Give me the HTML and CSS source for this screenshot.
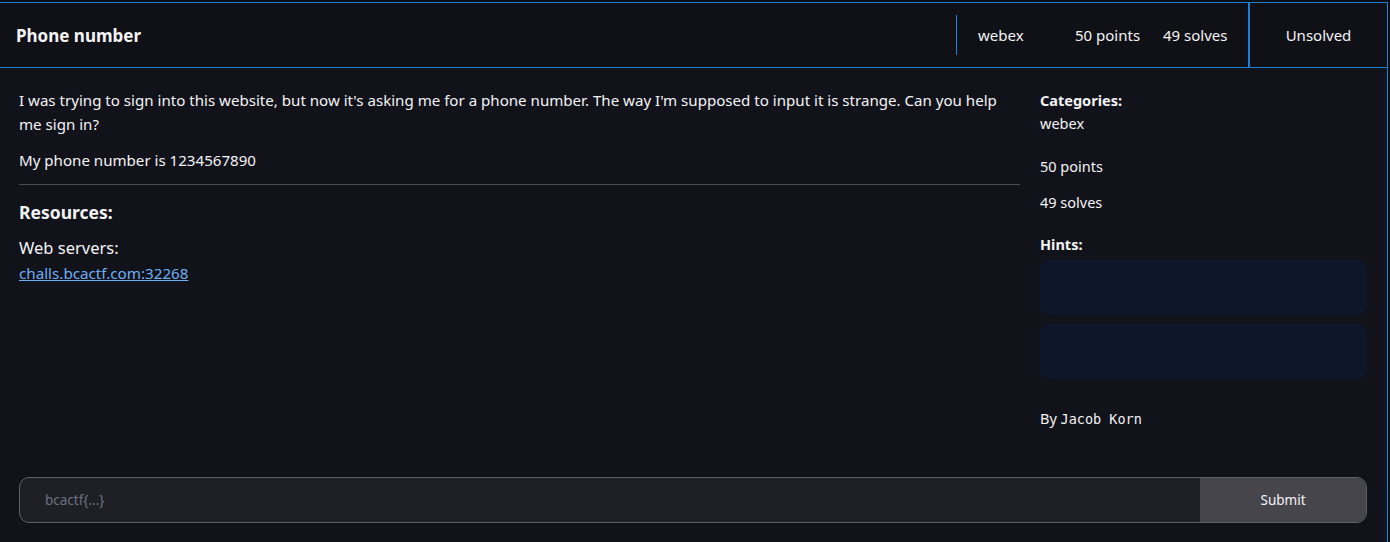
FILE: index.html
```html
<!DOCTYPE html>
<html lang="en">
<head>
<meta charset="utf-8">
<title>Phone number</title>
<link rel="stylesheet" href="styles.css">
</head>
<body>
<div class="card">
  <header class="head">
    <h1 class="title">Phone number</h1>
    <div class="meta">
      <span class="meta-cat">webex</span>
      <span class="meta-pts">50 points</span>
      <span class="meta-solves">49 solves</span>
    </div>
    <div class="status">Unsolved</div>
  </header>
  <div class="body">
    <main class="desc">
      <p class="para">I was trying to sign into this website, but now it's asking me for a phone number. The way I'm supposed to input it is strange. Can you help me sign in?</p>
      <p class="para">My phone number is 1234567890</p>
      <hr class="rule">
      <h2 class="res-title">Resources:</h2>
      <div class="res-label">Web servers:</div>
      <a class="res-link" href="#">challs.bcactf.com:32268</a>
    </main>
    <aside class="side">
      <div class="side-label">Categories:</div>
      <div class="side-val">webex</div>
      <div class="side-pts">50 points</div>
      <div class="side-solves">49 solves</div>
      <div class="side-label hints-label">Hints:</div>
      <div class="hint"></div>
      <div class="hint"></div>
      <div class="author">By <code class="author-name">Jacob Korn</code></div>
    </aside>
  </div>
  <form class="flag">
    <input class="flag-input" type="text" placeholder="bcactf{...}">
    <button class="flag-btn" type="button">Submit</button>
  </form>
</div>
</body>
</html>
```

FILE: styles.css
```css
html, body {
  margin: 0;
  padding: 0;
  background: #0e0f14;
  height: 100%;
  overflow: hidden;
}
body {
  font-family: "Noto Sans", "Open Sans", sans-serif;
  color: #f3f4f6;
  padding-top: 2px;
}
.card {
  width: 1388px;
  height: 560px;
  background: #12121a;
  border-top: 1px solid #1d7fd6;
  border-right: 1px solid #1d7fd6;
  box-sizing: border-box;
}
.head {
  display: flex;
  align-items: center;
  height: 65px;
  background: #101117;
  border-bottom: 1px solid #1d7fd6;
  box-sizing: border-box;
}
.title {
  margin: 0 0 0 16px;
  font-size: 17px;
  font-weight: 700;
  flex: 1;
}
.meta {
  display: flex;
  align-items: center;
  height: 40px;
  border-left: 1px solid #1d7fd6;
  font-size: 15px;
  padding-left: 21px;
  width: 292px;
  box-sizing: border-box;
}
.meta-cat { width: 97px; }
.meta-pts { width: 88px; }
.status {
  align-self: stretch;
  display: flex;
  align-items: center;
  justify-content: center;
  width: 139px;
  border-left: 2px solid #1d7fd6;
  font-size: 15px;
  box-sizing: border-box;
}
.body {
  display: flex;
  padding: 20px 20px 0 19px;
  gap: 20px;
  height: 386px;
  box-sizing: border-box;
}
.desc {
  width: 1001px;
}
.para {
  margin: 0 0 12px;
  padding-right: 12px;
  font-size: 15.1px;
  line-height: 24px;
}
.rule {
  border: 0;
  border-top: 1px solid #4b4b52;
  margin: 4px 0 13px;
}
.res-title {
  margin: 0 0 10px;
  font-size: 17.5px;
  font-weight: 700;
  line-height: 28px;
}
.res-label {
  font-size: 16.5px;
  line-height: 24px;
}
.res-link {
  color: #6daef5;
  font-size: 15.2px;
  line-height: 26px;
  text-decoration: underline;
}
.side {
  width: 327px;
  display: flex;
  flex-direction: column;
  font-size: 14.5px;
  padding-top: 1px;
}
.side-label {
  font-weight: 700;
  line-height: 22px;
}
.side-val { line-height: 25px; }
.side-pts { line-height: 24px; margin-top: 18px; }
.side-solves { line-height: 24px; margin-top: 12px; }
.hints-label { margin-top: 19px; margin-bottom: 5px; }
.hint {
  height: 55px;
  background: #0e172a;
  border-radius: 9px;
  margin-bottom: 9px;
}
.author {
  margin-top: 20px;
  line-height: 20px;
}
.author-name {
  font-family: "DejaVu Sans Mono", monospace;
  font-size: 13.5px;
}
.flag {
  display: flex;
  margin: 23px 20px 0 19px;
  height: 46px;
  box-sizing: border-box;
  border: 1px solid #5e5e66;
  border-radius: 10px;
  overflow: hidden;
  background: #1f1f26;
}
.flag-input {
  flex: 1;
  background: transparent;
  border: 0;
  outline: none;
  padding: 0 0 0 25px;
  font-family: "Noto Sans", sans-serif;
  font-size: 13.5px;
  color: #e5e7eb;
}
.flag-input::placeholder { color: #6b7280; }
.flag-btn {
  width: 166px;
  background: #46454c;
  border: 0;
  color: #f3f4f6;
  font-family: "Noto Sans", sans-serif;
  font-size: 13.5px;
}
```
